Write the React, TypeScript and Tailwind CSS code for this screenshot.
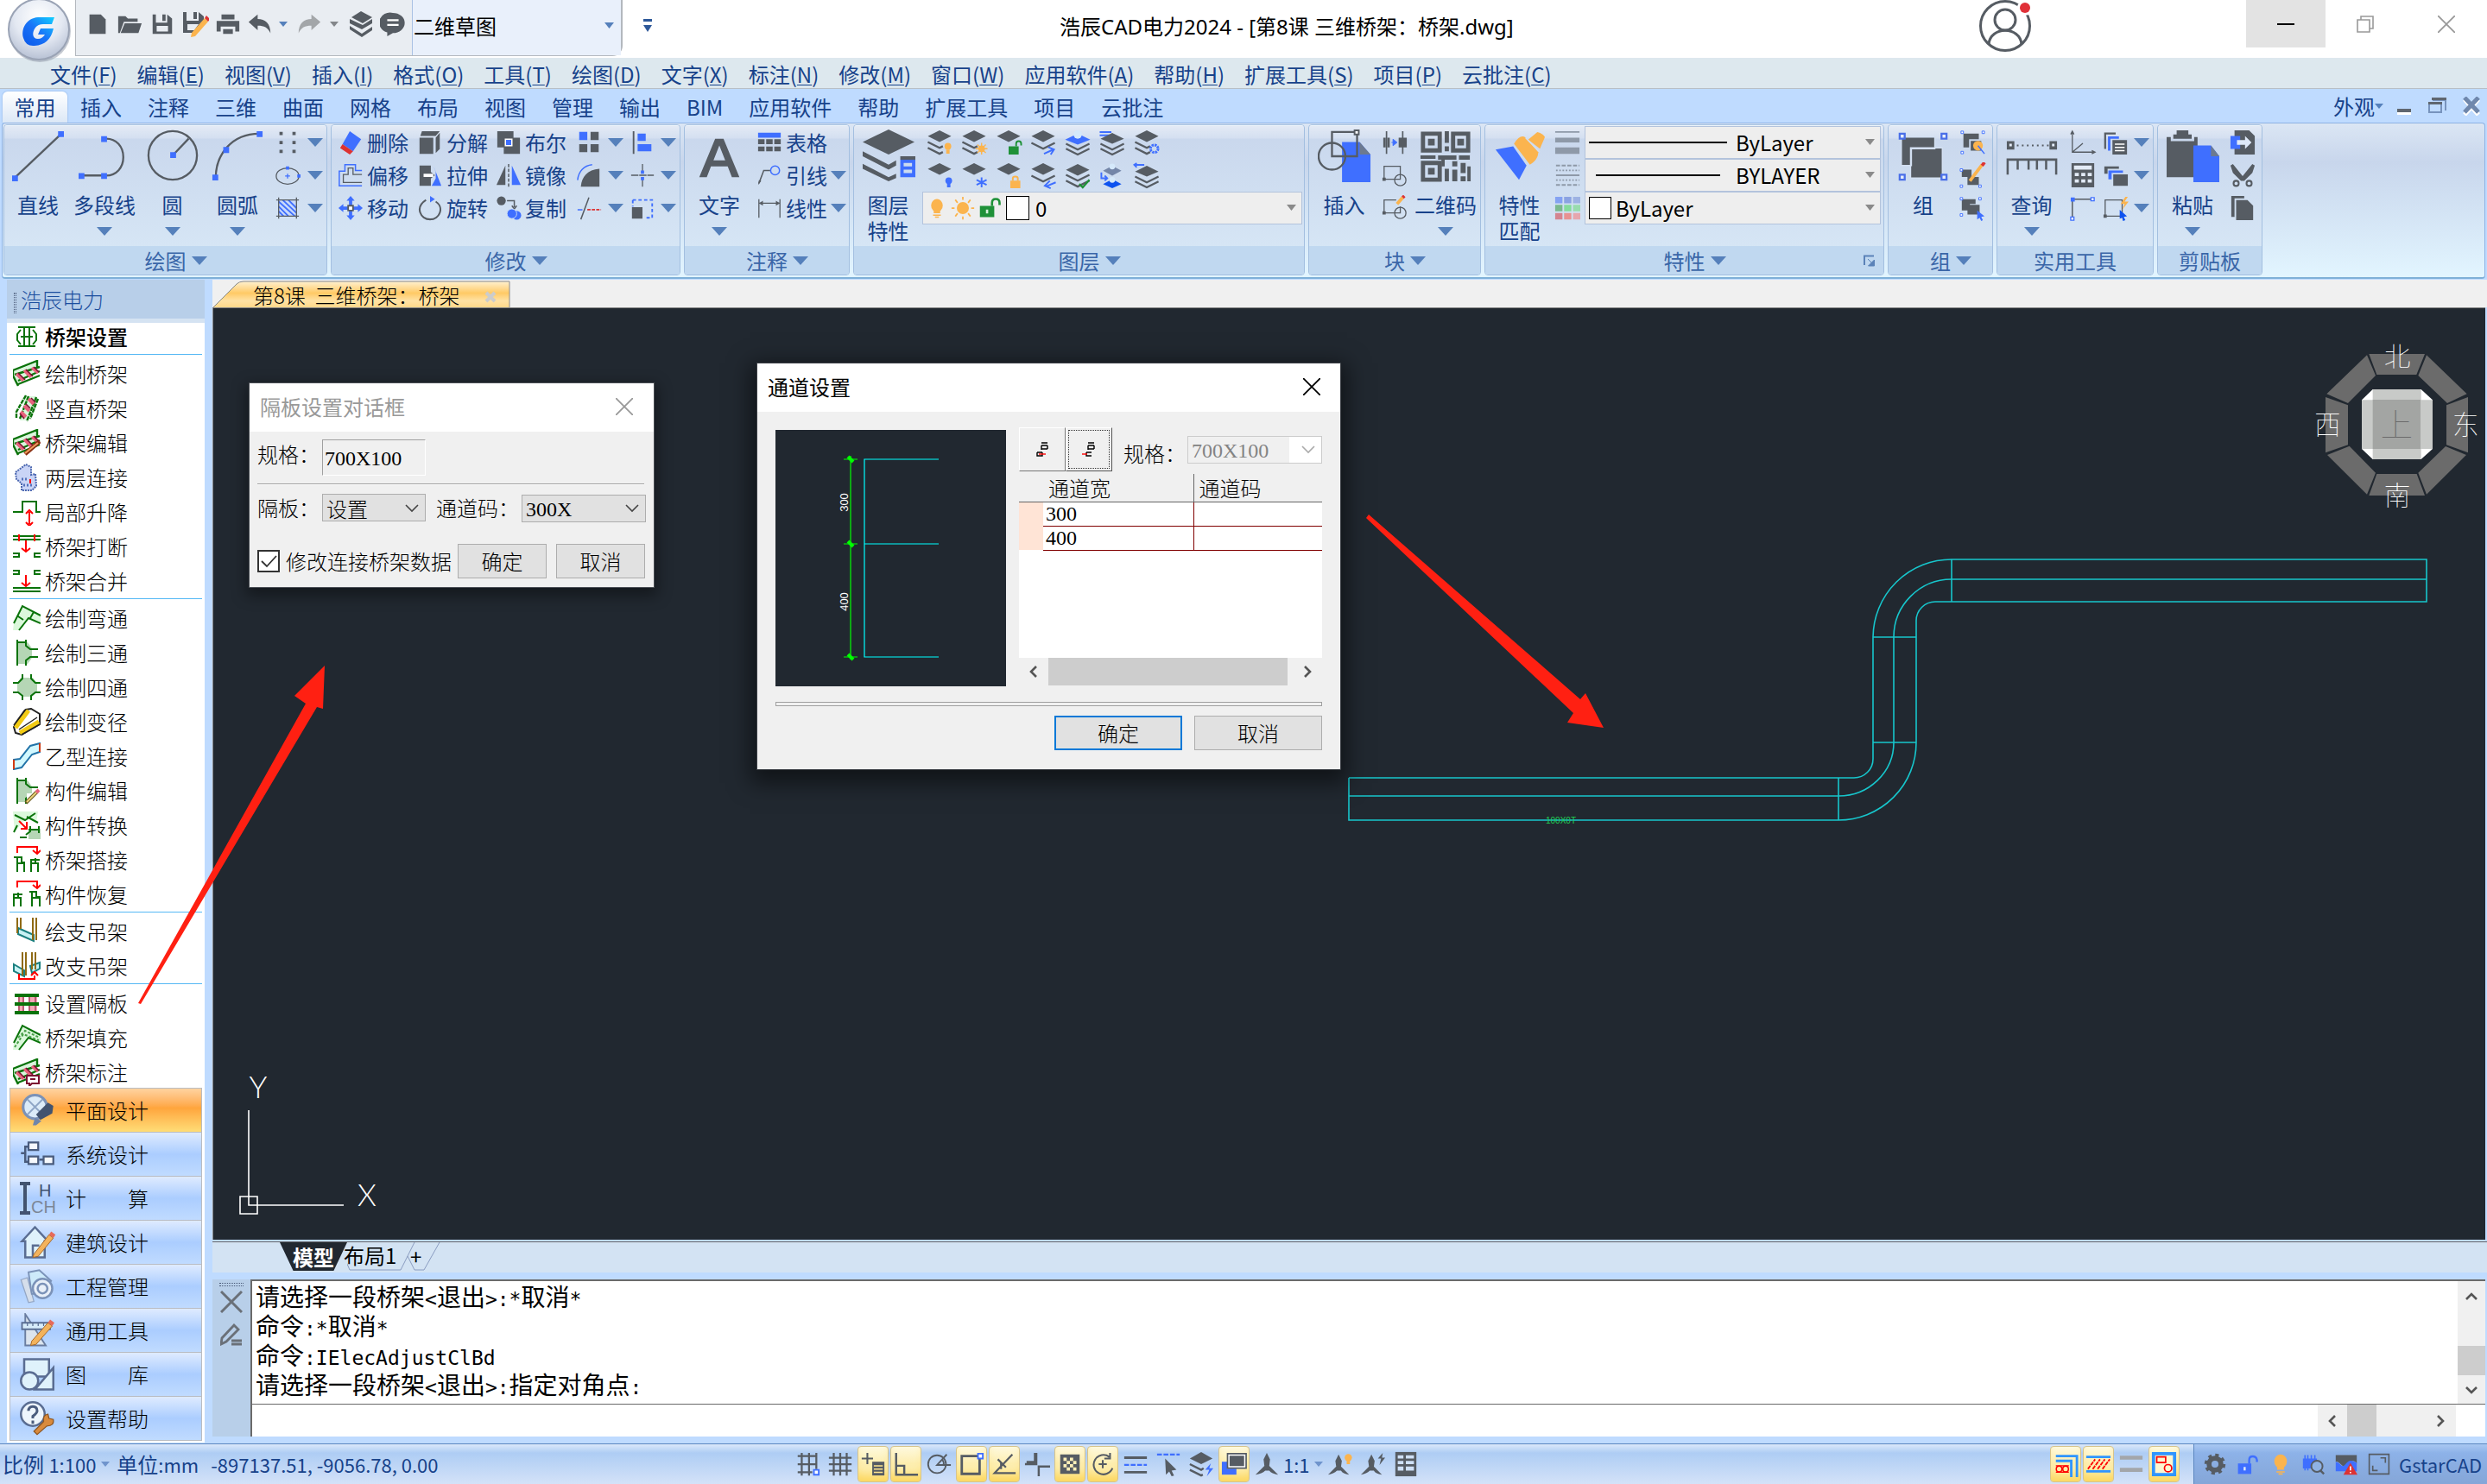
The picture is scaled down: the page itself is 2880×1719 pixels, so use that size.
import type { ReactNode } from 'react';

const K = '#565c63';
const B = '#3f6fff';
const O = '#fbb44e';
const G = '#1f9138';
const DG = '#0a730a';

const stack = (
  <>
    <path d="M16 2 30 9 16 16 2 9Z" fill={K} />
    <path d="M2 15l14 7 14-7M2 22l14 7 14-7" stroke={K} strokeWidth="2.4" fill="none" />
  </>
);
const stackTop = <path d="M16 1 30 8 16 15 2 8Z" fill={K} />;
const stackHalf = <path d="M2 15l14 7 4-2M2 22l14 7 4-2" stroke={K} strokeWidth="2.4" fill="none" />;
const twoLayers = <path d="M2 16l14 7 14-7" stroke={K} strokeWidth="2.4" fill="none" />;
const ladder = (
  <>
    <path d="M1 13 27 3v11L5 27l-3-6Z" fill="#d9f7dc" />
    <path d="M0 12 28 1v8M0 12v6l6 12M2 17 31 8M6 28 31 18M6 24 31 13" stroke={DG} strokeWidth="2.4" fill="none" />
    <path d="M4 16l8 8M13 12l8 8M22 9l7 6" stroke="#e8627c" strokeWidth="3.5" />
    <path d="M6 15l8 8M15 11l8 8M24 8l6 6" stroke="#7a1030" strokeWidth="1.6" />
  </>
);
const tee = (
  <>
    <path d="M6 4h11l5 7v11l-5 7H6Z" fill="#b5d6b5" />
    <path d="M5 1v30M5 4h9M15 1v7l5 4h9M15 31v-6l5-4h9" stroke={DG} strokeWidth="2" fill="none" />
  </>
);
const joint = (
  <>
    <path d="M5 8V1h23v7M23 5l5 4 4-4" stroke="#ff0000" strokeWidth="2" fill="none" />
    <path d="M1 13h9v6h3v11M5 30V14M5 20h8M21 30V16h10M21 20h8v10M26 14v6" stroke={DG} strokeWidth="2" fill="none" />
  </>
);
const jointBack = (
  <>
    <path d="M5 8V1h23v7M23 5l5 4 4-4" stroke="#ff0000" strokeWidth="2" fill="none" />
    <path d="M1 30V16h10M1 20h8v10M6 14v6M19 13h8v6h4v11M22 30V14M22 20h9" stroke={DG} strokeWidth="2" fill="none" />
  </>
);

const icons: Record<string, ReactNode> = {
  // quick access
  newFile: <path d="M6 4h14l6 6v18H6Z" fill={K} />,
  open: <path d="M2 27V6h9l3 3h12v4H9L4 27ZM10 15h21l-4 12H5Z" fill={K} />,
  save: <path d="M4 4h4v10h14V4l6 5v19H4ZM16 4h4v8h-4ZM9 18v7h14v-7Z" fill={K} fillRule="evenodd" />,
  saveAs: (
    <>
      <path d="M2 2h4v10h14V2l6 5v10L16 26H2ZM14 2h4v8h-4ZM7 16v7h8l5-7Z" fill={K} fillRule="evenodd" />
      <path d="M12 26 27 9l4 4-15 17-5 1Z" fill={O} />
      <path d="M27 9l2-3 4 4-2 3Z" fill="#dd3333" />
    </>
  ),
  print: <path d="M8 4h16v6H8ZM2 12h28v13h-5v-6H7v6H2ZM10 22h12v6H10Z" fill={K} />,
  undo: <path d="M1 13 13 3v6c10 0 17 6 17 19-4-8-8-10-17-10v6Z" fill={K} />,
  redo: <path d="M31 13 19 3v6C9 9 2 15 2 28c4-8 8-10 17-10v6Z" fill="#a3a6a9" />,
  pages: (
    <>
      <path d="M16 1 29 8 18 15 5 8Z" fill={K} />
      <path d="M3 10v5l14 7 12-7v-5L18 17ZM3 18v4l14 9 12-8v-4l-12 8Z" fill={K} />
    </>
  ),
  chat: (
    <>
      <path d="M16 2a14 12 0 0 1 0 25l-7 4v-5A13 12 0 0 1 16 2Z" fill={K} />
      <path d="M9 11h14M9 17h14" stroke="#fff" strokeWidth="2.5" />
    </>
  ),
  // draw
  points: <path d="M6 3h4v4H6ZM22 3h4v4h-4ZM6 14h4v4H6ZM22 14h4v4h-4ZM6 25h4v4H6ZM22 25h4v4h-4Z" fill={K} />,
  ellipse: (
    <>
      <ellipse cx="16" cy="17" rx="14" ry="10" stroke={K} strokeWidth="1.4" fill="none" />
      <path d="M16 14v6M13 17h6" stroke={B} strokeWidth="1.4" />
      <path d="M14 5h4v4h-4ZM28 15h4v4h-4Z" fill={B} />
    </>
  ),
  hatch: (
    <>
      <path d="M5 6h22v20H5Z" fill="#c8d9fb" />
      <path d="M5 8l20 18M10 6l17 16M17 6l10 10M5 14l12 12M5 20l6 6" stroke={B} strokeWidth="2" />
      <path d="M2 6h28M2 26h28M5 3v26M27 3v26" stroke={K} strokeWidth="1.4" />
    </>
  ),
  // modify
  erase: (
    <>
      <path d="M15 2 29 12 19 27 6 18Z" fill={B} />
      <path d="M6 18 19 27l-4 4L3 23Z" fill="#dd3333" />
    </>
  ),
  explode: <path d="M3 10h17v20H3ZM6 2h22l-5 6H4ZM23 10l5-6v20l-5 5Z" fill={K} />,
  boolean: (
    <>
      <path d="M2 2h20v20H2ZM10 10h20v20H10Z" fill={K} />
      <path d="M12 12h8v8h-8Z" fill={B} stroke="#fff" strokeWidth="1.6" />
    </>
  ),
  array: (
    <>
      <path d="M18 3h10v10H18ZM4 18h10v10H4ZM18 18h10v10H18Z" fill={K} />
      <path d="M4 3h10v10H4Z" fill={B} />
    </>
  ),
  align: (
    <>
      <path d="M5 2v28" stroke={K} strokeWidth="2" />
      <path d="M10 5h10v9H10ZM10 18h17v9H10Z" fill={B} />
    </>
  ),
  offset: (
    <>
      <path d="M30 10h-8V3H9v8H2v18h28" stroke={B} strokeWidth="1.6" fill="none" />
      <path d="M30 15h-11V7h-6v8H7v10h23" stroke={K} strokeWidth="1.4" fill="none" />
    </>
  ),
  stretch: (
    <>
      <path d="M3 4h14v8l5 4-5 4v9H3Z" fill={K} />
      <path d="M20 4l10 25H18l5-9V12Z" fill={B} />
      <path d="M8 16h12" stroke="#fff" strokeWidth="4" />
    </>
  ),
  mirror: (
    <>
      <path d="M12 4v24H1Z" fill={K} />
      <path d="M20 4v24h11Z" fill={B} />
      <path d="M16 2v28" stroke={K} strokeWidth="1.6" strokeDasharray="4 2" />
    </>
  ),
  fillet: (
    <>
      <path d="M6 30C7 18 14 9 29 8v22Z" fill={K} />
      <path d="M2 22C3 11 10 4 20 3" stroke={B} strokeWidth="1.6" fill="none" />
    </>
  ),
  breakAt: (
    <>
      <path d="M16 2v9M16 21v9M2 16h28" stroke={K} strokeWidth="1.4" strokeDasharray="9 1" />
      <path d="M14 10h4v4h-4ZM14 18h4v4h-4Z" fill={B} />
    </>
  ),
  move: (
    <>
      <path d="M16 1l5 6h-3v6h-4V7h-3ZM16 31l5-6h-3v-6h-4v6h-3ZM1 16l6-5v3h6v4H7v3ZM31 16l-6-5v3h-6v4h6v3Z" fill={B} />
      <path d="M13 13h6v6h-6Z" fill="#fff" stroke={K} strokeWidth="2" />
    </>
  ),
  rotate: (
    <>
      <path d="M11 6C-3 15 4 30 16 30S34 15 23 8" stroke={K} strokeWidth="2.2" fill="none" />
      <path d="M16 1l6 4-6 4Z" fill={B} />
    </>
  ),
  copy: (
    <>
      <circle cx="7" cy="7" r="5.5" fill={K} />
      <path d="M14 7h9v8M20 13l3 4 3-4" stroke={K} strokeWidth="1.6" fill="none" />
      <circle cx="26" cy="25" r="5.5" fill={B} />
      <circle cx="20" cy="23" r="6" fill={B} stroke="#d0e0f4" />
    </>
  ),
  trim: (
    <>
      <path d="M6 30 16 3" stroke={K} strokeWidth="1.6" />
      <path d="M2 18h6" stroke={B} strokeWidth="1.6" />
      <path d="M14 18h17" stroke="#dd3333" strokeWidth="1.8" strokeDasharray="4 1.5" />
    </>
  ),
  scale: (
    <>
      <path d="M4 6h24v22H18M4 6v8" stroke={B} strokeWidth="2" strokeDasharray="4 3" fill="none" />
      <path d="M3 15h13v14H3Z" fill={K} />
    </>
  ),
  // annotation
  table: (
    <>
      <path d="M2 4h28v6H2Z" fill={B} />
      <path d="M2 12h8v6H2ZM12 12h8v6h-8ZM22 12h8v6h-8ZM2 21h8v6H2ZM12 21h8v6h-8ZM22 21h8v6h-8Z" fill={K} />
    </>
  ),
  leader: (
    <>
      <path d="M3 26 9 10h8" stroke={K} strokeWidth="1.6" fill="none" />
      <path d="M2 28l1-6 3 1Z" fill={K} />
      <circle cx="23" cy="10" r="5.5" stroke={B} strokeWidth="1.6" fill="none" />
    </>
  ),
  linear: (
    <>
      <path d="M3 5v23M29 5v23M3 10h26" stroke={K} strokeWidth="1.4" />
      <path d="M3 10l5-3v6ZM29 10l-5-3v6Z" fill={K} />
    </>
  ),
  // layer states
  lyBulb: <>{stackTop}{stackHalf}<circle cx="26" cy="20" r="4" fill={O} /><path d="M24 24h4v5h-4Z" fill={O} /></>,
  lySun: <>{stackTop}{stackHalf}<circle cx="25" cy="23" r="4" fill={O} /><path d="M25 16v14M18 23h14M20 18l10 10M30 18 20 28" stroke={O} strokeWidth="1.4" /></>,
  lyUnlock: <>{stackTop}<path d="M16 20h12v10H16Z" fill={G} /><path d="M25 20v-3q0-3 3-3t3 3v2" stroke={G} strokeWidth="2" fill="none" /></>,
  lyNext: <>{stackTop}{twoLayers}<path d="M17 29l11-5M22 21l7 3-4 6" stroke={B} strokeWidth="2" fill="none" /></>,
  lyBlue: (
    <>
      <path d="M16 5 31 12 16 18 1 12Z" fill={B} />
      <circle cx="16" cy="6" r="5" fill="#d5e9fb" />
      <path d="M2 17l14 7 14-7M2 23l14 7 14-7" stroke={K} strokeWidth="2.2" fill="none" />
    </>
  ),
  lyList: <><path d="M1 3h14M1 7h12" stroke={B} strokeWidth="2" /><path d="M16 4 30 11 16 17 2 11Z" fill={K} /><path d="M2 17l14 7 14-7M2 23l14 7 14-7" stroke={K} strokeWidth="2.2" fill="none" /></>,
  lyGear: <>{stackTop}{stackHalf}<circle cx="25" cy="23" r="4.5" stroke={B} strokeWidth="3" strokeDasharray="2.5 1" fill="none" /></>,
  lyBulbB: <>{stackTop}<circle cx="27" cy="22" r="4" fill={B} /><path d="M25 25h4v5h-4Z" fill={B} /></>,
  lyFreeze: <>{stackTop}<path d="M25 18v12M19 21l12 6M31 21l-12 6" stroke={B} strokeWidth="2" /></>,
  lyLock: <>{stackTop}<path d="M18 22h12v9H18Z" fill={O} /><path d="M21 22v-3q0-2 3-2t3 2v3" stroke={O} strokeWidth="2" fill="none" /></>,
  lyPrev: <>{stackTop}{twoLayers}<path d="M31 24l-12 5M24 22l-6 6 7 3" stroke={B} strokeWidth="2" fill="none" /></>,
  lyCheck: <>{stack}<path d="M18 26l4 4 8-9" stroke={G} strokeWidth="2.4" fill="none" /></>,
  lyMove: (
    <>
      <path d="M16 4 27 10 16 16 5 10Z" fill="#7486a8" />
      <path d="M16 20 27 26 16 31 5 26Z" fill="#0d52ef" />
      <circle cx="16" cy="5" r="3.5" fill="#d5e9fb" /><circle cx="16" cy="21" r="3.5" fill="#d5e9fb" />
      <path d="M3 12v7h6M7 16l3 3-3 3" stroke={B} strokeWidth="2" fill="none" />
    </>
  ),
  lyWalk: <><path d="M1 3h12M4 1 1 3l3 3" stroke={B} strokeWidth="2" fill="none" /><path d="M16 4 30 11 16 17 2 11Z" fill={K} /><path d="M2 17l14 7 14-7M2 23l14 7 14-7" stroke={K} strokeWidth="2.2" fill="none" /></>,
  bulb: <><ellipse cx="16" cy="12" rx="9" ry="10" fill={O} /><path d="M11 19h10v5H11ZM10 26h12v2H10ZM13 29h6v2h-6Z" fill={O} /></>,
  sun: <><circle cx="16" cy="16" r="8" fill={O} /><path d="M16 1v4M16 27v4M1 16h4M27 16h4M6 5l3 4M23 23l3 4M26 5l-3 4M9 23l-3 4" stroke={O} strokeWidth="2" /></>,
  unlock: <><path d="M2 13h19v15H2Z" fill={G} /><path d="M18 13V9q0-5 5-5t5 5v3" stroke={G} strokeWidth="3" fill="none" /><path d="M10 18h3v5h-3Z" fill="#d6f0da" /></>,
  // block
  attr: (
    <>
      <path d="M6 2v28M26 2v28" stroke={K} strokeWidth="1.8" />
      <path d="M2 10h3v12H2ZM7 10h3v12H7ZM21 10h10v12H21Z" fill={K} />
      <path d="M12 16h4M14 12l5 4-5 4Z" fill={B} stroke={B} />
    </>
  ),
  block: (
    <>
      <path d="M3 5h20v16H3Z" stroke={K} strokeWidth="1.4" fill="none" />
      <ellipse cx="23" cy="22" rx="7" ry="7" stroke={K} strokeWidth="1.4" fill="none" />
      <path d="M1 19h4v4H1Z" fill={K} />
    </>
  ),
  blockEdit: (
    <>
      <path d="M18 6H3v16h20v-8" stroke={K} strokeWidth="1.4" fill="none" />
      <ellipse cx="23" cy="22" rx="7" ry="7" stroke={K} strokeWidth="1.4" fill="none" />
      <path d="M1 20h4v4H1Z" fill={K} />
      <path d="M19 11 26 3" stroke={O} strokeWidth="4" /><path d="M26 3l2-2" stroke="#dd3333" strokeWidth="4" />
    </>
  ),
  // properties
  weights: <path d="M1 2h30v2H1ZM1 10h30v6H1ZM1 22h30v8H1Z" fill="#8e99a8" />,
  types: (
    <>
      <path d="M2 4h29M2 28h29" stroke="#8e99a8" strokeWidth="2" strokeDasharray="5 2" />
      <path d="M2 10h29M2 22h29" stroke="#8e99a8" strokeWidth="2" strokeDasharray="2 2" />
      <path d="M2 16h29" stroke="#8e99a8" strokeWidth="2" />
    </>
  ),
  colors: (
    <>
      <path d="M1 2h9v8H1Z" fill="#84a2f2" /><path d="M12 2h9v8h-9Z" fill="#8ba3e2" /><path d="M23 2h9v8h-9Z" fill="#9db2e3" />
      <path d="M1 12h9v8H1Z" fill="#7ab88f" /><path d="M12 12h9v8h-9Z" fill="#84dc9c" /><path d="M23 12h9v8h-9Z" fill="#98dcae" />
      <path d="M1 22h9v8H1Z" fill="#d48490" /><path d="M12 22h9v8h-9Z" fill="#e89292" /><path d="M23 22h9v8h-9Z" fill="#e6a6ae" />
    </>
  ),
  // group
  groupNew: (
    <>
      <path d="M5 5h19v7H12v10H5ZM14 14h13v12H14Z" fill={K} />
      <path d="M2 2h3v3H2ZM28 2h3v3h-3ZM2 27h3v3H2Z" fill="#fff" stroke={B} />
      <circle cx="23" cy="20" r="6" fill={O} /><path d="M23 20l8 10" stroke={B} strokeWidth="1.6" />
    </>
  ),
  groupEdit: (
    <>
      <path d="M3 9h12v9H3ZM10 18h14v10H10Z" fill={K} />
      <path d="M1 8h3v3H1ZM1 28h3v3H1ZM24 28h3v3h-3Z" fill="#fff" stroke={B} />
      <path d="M13 23 28 3" stroke={O} strokeWidth="4" /><path d="M28 4l3-4" stroke="#dd3333" strokeWidth="4" />
    </>
  ),
  groupPick: (
    <>
      <path d="M3 5h17v6h-7v8H3ZM10 12h15v12H10Z" fill={K} />
      <path d="M1 3h3v3H1ZM24 3h3v3h-3ZM1 23h3v3H1Z" fill="#fff" stroke={B} />
      <path d="M22 19l9 7-4 1 2 4-2 1-2-4-3 2Z" fill={B} />
    </>
  ),
  // utilities
  axis: <path d="M3 3v25h27M3 28 16 17M1 6l2-4 2 4M27 26l4 2-4 2" stroke={K} strokeWidth="1.4" fill="none" />,
  calc: (
    <>
      <path d="M2 1h28v30H2Z" fill={K} />
      <path d="M5 4h22v5H5ZM6 13h5v4H6ZM14 13h5v4h-5ZM22 13h5v4h-5ZM6 21h5v4H6ZM14 21h5v4h-5ZM22 21h5v4h-5Z" fill="#e3ebf6" />
    </>
  ),
  corner: (
    <>
      <path d="M3 5v22M3 5h24" stroke={K} strokeWidth="1.6" />
      <path d="M1 3h5v5H1Z" fill={B} />
      <path d="M26 3h4v4h-4ZM1 27h4v4H1Z" fill="#fff" stroke={B} strokeWidth="1.4" />
    </>
  ),
  sheets: (
    <>
      <path d="M3 24V5h13" stroke={K} strokeWidth="2.4" fill="none" /><path d="M8 26V10h12" stroke={B} strokeWidth="3" fill="none" />
      <path d="M12 13h18v18H12Z" fill={K} /><path d="M15 18h12M15 22h12M15 26h12" stroke="#fff" strokeWidth="1.6" />
    </>
  ),
  order: <><path d="M2 14V5h18v3H6v6Z" fill={K} /><path d="M7 21V10h18v3H11v8Z" fill={B} /><path d="M13 15h18v14H13Z" fill={K} /></>,
  quick: (
    <>
      <path d="M3 6h21v20H3Z" stroke={K} strokeWidth="1.4" fill="none" />
      <path d="M1 24h4v4H1Z" fill={K} />
      <path d="M28 2l-6 9h5l-3 7 8-10h-5l4-6Z" fill={O} /><path d="M21 18l9 8-4 1 2 4-3 1-1-4-3 1Z" fill="#0d52ef" />
    </>
  ),
  pasteTo: (
    <>
      <path d="M6 1h18l7 7v23H6Z" fill={K} />
      <path d="M1 8h12v16H1Z" fill={B} /><path d="M9 13h10V8l8 8-8 8v-5H9Z" fill="#dfe9f8" />
    </>
  ),
  cut: (
    <>
      <path d="M1 4l3-2 12 15L28 2l3 2-3 9-10 10h-4L4 13Z" fill={K} />
      <circle cx="8" cy="26" r="3.2" stroke={K} strokeWidth="2.2" fill="none" /><circle cx="24" cy="26" r="3.2" stroke={K} strokeWidth="2.2" fill="none" />
    </>
  ),
  copyClip: <path d="M2 1h16v3H6v23H2ZM8 6h14l7 7v18H8Z" fill={K} />,
  launcher: <><path d="M4 26V5h22" stroke="#5b82b8" strokeWidth="4" fill="none" /><path d="M12 12l14 14M27 14v14H13Z" stroke="#5b82b8" strokeWidth="2" fill="#5b82b8" /></>,
  // side list
  trSet: <path d="M6 5h20M6 27h20M13 5v22M19 5v22M9 8l-4 5v7l4 5M23 8l4 5v7l-4 5M9 16h14" stroke={DG} strokeWidth="2" fill="none" />,
  trDraw: ladder,
  trVert: (
    <>
      <path d="M14 2 26 2 18 30H8Z" fill="#d9f7dc" />
      <path d="M15 1 4 20v7M18 2 8 28M27 3 16 31M29 5 20 28" stroke={DG} strokeWidth="2.4" fill="none" strokeDasharray="5 1" />
      <path d="M9 20l6 6M13 13l6 6M18 5l6 6" stroke="#e8627c" strokeWidth="4" />
      <path d="M8 22l5 6M15 11l5 5M21 4l5 5" stroke="#7a1030" strokeWidth="1.6" />
    </>
  ),
  trEdit: <>{ladder}<path d="M14 29 31 14" stroke="#8a2f12" strokeWidth="5" /><path d="M14 28 29 16" stroke="#f0a060" strokeWidth="2" /></>,
  trTwo: (
    <>
      <path d="M3 10 15 1l6 3v9l5-1 1 14-5 5H10v-8L4 18Z" fill="#c9d4f6" stroke="#4a66b0" strokeDasharray="2 1" strokeWidth="2" />
      <path d="M10 18h8M12 25h12" stroke="#5572bb" strokeWidth="3" strokeDasharray="2 2" />
      <path d="M20 18v5" stroke="red" strokeWidth="2" />
    </>
  ),
  trLift: (
    <>
      <path d="M0 16h11V4h16v12h5" stroke={DG} strokeWidth="2" fill="none" />
      <path d="M19 16v14M15 18l4-4 4 4M15 28l4 4 4-4" stroke="red" strokeWidth="2" fill="none" />
    </>
  ),
  trBreak: (
    <>
      <path d="M0 4h32M0 8h32M0 24h7v4H0M32 24h-7v4h7" stroke={DG} strokeWidth="2" fill="none" />
      <path d="M7 2v8M25 2v8M15 9v13M10 18l5 4 5-4" stroke="red" strokeWidth="2" fill="none" />
    </>
  ),
  trMerge: (
    <>
      <path d="M0 4h7v4H0M32 4h-7v4h7M0 24h32M0 28h32" stroke={DG} strokeWidth="2" fill="none" />
      <path d="M15 9v13M10 18l5 4 5-4" stroke="red" strokeWidth="2" fill="none" />
    </>
  ),
  trBend: (
    <>
      <path d="M1 22 11 3 32 13v9L18 16 8 30H0Z" fill="#dcf8dc" />
      <path d="M1 22 11 2 32 13M32 22 18 16 7 30M6 14l6 4M24 9l-4 7" stroke={DG} strokeWidth="2" fill="none" />
    </>
  ),
  trTee: tee,
  trCross: (
    <>
      <path d="M9 5h14l5 7v9l-6 6H11l-6-6v-9Z" fill="#b5d6b5" />
      <path d="M11 1v5l-5 5H0M21 1v5l5 5h6M0 22h6l5 4v5M32 22h-6l-5 4v5" stroke={DG} strokeWidth="2" fill="none" />
    </>
  ),
  trTaper: (
    <>
      <path d="M1 22 15 2l6-1 10 6v12L10 31 3 29Z" fill="#fff" stroke="#222" strokeWidth="2" />
      <path d="M3 23 18 3M8 29 30 16" stroke="#f2cb14" strokeWidth="5" /><path d="M1 20 14 2M7 25 28 11M10 31 31 19" stroke="#222" strokeWidth="1.5" />
    </>
  ),
  trZ: (
    <>
      <path d="M1 20 8 19 20 4 31 1v10l-9 3L10 29l-9 2Z" fill="#d2f8ff" stroke="#2273a8" strokeWidth="2" />
      <path d="M1 20v11M31 1v10" stroke="#d03a12" strokeWidth="2" />
    </>
  ),
  trPartEdit: <>{tee}<path d="M16 19h16v13H16Z" fill="#fff" /><path d="M15 30 28 17" stroke="#6b5a20" strokeWidth="4" /><path d="M16 29 28 17" stroke="#ead27a" strokeWidth="2" /><path d="M27 18l3-3" stroke="#e8627c" strokeWidth="4" /></>,
  trConvert: (
    <>
      <path d="M0 0h29l-2 13-12-6L2 24Z" fill="#dcf8dc" /><path d="M18 20h14v12H18Z" fill="#b5d6b5" />
      <path d="M2 4 14 10 26 2M1 24l4-8M16 6l13 7M20 17v6l-5 4M30 17v8M8 30h8M18 21h12" stroke={DG} strokeWidth="2" fill="none" />
      <path d="M7 11l8 8M9 20h7v-8" stroke="red" strokeWidth="2" fill="none" />
    </>
  ),
  trJoin: joint,
  trRestore: jointBack,
  trHanger: (
    <>
      <path d="M6 12 24 20v7L6 19Z" fill="#c8f2f4" stroke="#1c8080" strokeWidth="2" />
      <path d="M5 0v18M9 0v13M23 0v26M27 0v26" stroke="#8f6a14" strokeWidth="2" />
    </>
  ),
  trHangerEdit: (
    <>
      <path d="M1 14 13 21v7L1 22ZM20 16l11-4v7l-9 5Z" fill="#c8f2f4" stroke="#1c8080" strokeWidth="2" />
      <path d="M11 0v27M15 0v27M22 0v20M26 0v20" stroke="#8f6a14" strokeWidth="2" />
      <path d="M7 25v6h18v-4M21 27l4-4 4 4" stroke="red" strokeWidth="2" fill="none" />
    </>
  ),
  trPlate: (
    <>
      <path d="M6 6h22v22H6Z" fill="#f7a9b8" /><path d="M13 6h5v22h-5Z" fill="#fff" />
      <path d="M7 6v22M12 6v22M19 6v22M26 6v22" stroke="#7a1030" />
      <path d="M2 7h28M2 17h28M2 27h28" stroke={DG} strokeWidth="4" />
    </>
  ),
  trFill: (
    <>
      <path d="M1 22 11 3 32 13v9L18 16 8 30H0Z" fill="#dcf8dc" />
      <path d="M1 22 11 2 32 13M32 22 18 16 7 30" stroke={DG} strokeWidth="2" fill="none" />
      <path d="M2 27 12 12l18 7M6 16 14 8l17 8" stroke="#4aa04a" strokeWidth="2" strokeDasharray="3 2" fill="none" />
    </>
  ),
  trLabel: <>{ladder}<path d="M16 20h14v9h-8l-3 3v-3h-3Z" fill="#fff" stroke="#7a1030" strokeWidth="2" /><path d="M20 24h6" stroke="#7a1030" strokeWidth="2" /></>,
  // categories
  catPlan: (
    <>
      <circle cx="14" cy="13" r="11" fill="#dcebf8" stroke="#7b92b8" strokeWidth="2.5" />
      <path d="M7 6l14 14M21 6 7 20" stroke="#8fa6c6" strokeWidth="1.5" />
      <path d="M15 20 26 9l5 3-1 7-11 6Z" fill="#42536f" /><path d="M12 30l2-7 6 3-5 4Z" fill="#6f86ab" />
    </>
  ),
  catSystem: (
    <>
      <path d="M9 9H5v14h4M18 21h4M1 15h4" stroke="#4a5c7d" strokeWidth="2" fill="none" />
      <path d="M8 5h9v7H8ZM8 18h9v7H8ZM22 18h9v7h-9Z" fill="#f6f9fd" stroke="#4a5c7d" strokeWidth="1.8" />
    </>
  ),
  catHouse: (
    <>
      <path d="M2 15 14 2l12 13h-3v15H5V15Z" fill="#dff2fb" stroke="#5a6d92" strokeWidth="2" />
      <path d="M12 30V19h6" fill="none" stroke="#5a6d92" strokeWidth="2" />
      <path d="M13 27 27 9l4 3-14 17-5 1Z" fill="#f3b35c" stroke="#a8692a" strokeWidth=".8" /><path d="M27 9l2-3 4 3-2 3Z" fill="#e66a5a" />
    </>
  ),
  catManage: (
    <>
      <path d="M1 10l6-2 6 22-5 1Z" fill="#d5deeb" stroke="#93a6c4" /><path d="M8 3 18 1l11 10-8 12H11Z" fill="#cdeafa" stroke="#7b92b8" strokeWidth="1.5" />
      <circle cx="21" cy="18" r="9" fill="#e8eff8" stroke="#7b92b8" strokeWidth="2" /><circle cx="21" cy="18" r="4.5" fill="none" stroke="#7b92b8" strokeWidth="2" />
    </>
  ),
  catTools: (
    <>
      <path d="M5 1 24 30H5Z" fill="#dbe4ee" stroke="#6a7d9f" strokeWidth="1.5" />
      <path d="M2 9h26v6H2Z" fill="#d7ecfa" stroke="#5a6d92" strokeWidth="1.5" /><path d="M7 9v3M12 9v3M17 9v3M22 9v3" stroke="#5a6d92" />
      <path d="M11 26 26 9l4 3-15 17-5 1Z" fill="#f3b35c" stroke="#a8692a" strokeWidth=".8" /><path d="M26 9l2-3 4 3-2 3Z" fill="#e66a5a" />
    </>
  ),
  catLib: (
    <>
      <path d="M4 2h23v16H4Z" fill="#dff2fb" stroke="#5a6d92" strokeWidth="2" />
      <path d="M31 10v20H14Z" fill="#dff2fb" stroke="#5a6d92" strokeWidth="2" />
      <circle cx="9" cy="22" r="8" fill="#dff2fb" stroke="#5a6d92" strokeWidth="2" />
    </>
  ),
  catHelp: (
    <>
      <circle cx="12" cy="12" r="11" fill="#eef5fc" stroke="#5a6d92" strokeWidth="2" />
      <path d="M8 9q0-4 4-4t4 4q0 2-4 5v2M12 18v3" stroke="#4a5c7d" strokeWidth="2.4" fill="none" />
      <path d="M13 28 22 19q-1-6 4-7l1 4 4 1q1 6-6 6l-9 8Z" fill="#d98a3c" stroke="#8f5722" strokeWidth="1" />
    </>
  ),
  // status bar
  stSnap: <><path d="M4 6h24M4 16h24M4 26h18M9 2v28M18 2v28M27 2v20" stroke={K} strokeWidth="2.4" /><path d="M24 23h6v6h-6Z" fill="#fff" stroke={B} strokeWidth="2" /></>,
  stGrid: <path d="M2 8h28M2 16h28M2 24h28M8 2v28M16 2v28M24 2v28" stroke={K} strokeWidth="2.4" />,
  stInput: <><path d="M2 9h14M9 2v14" stroke={K} strokeWidth="2.2" /><path d="M15 13h15v17H15Z" fill={K} /><path d="M17 18h11M17 22h11M17 26h11" stroke="#fde48f" strokeWidth="1.6" /></>,
  stOrtho: <path d="M4 2v27h27M4 18h10v11" stroke={K} strokeWidth="2.6" fill="none" />,
  stPolar: <><circle cx="14" cy="16" r="11" stroke={K} strokeWidth="2" fill="none" /><path d="M31 17H14L26 4M20 10q3 3 2 7" stroke={K} strokeWidth="2" fill="none" /></>,
  stOsnap: <><path d="M4 6h22v22H4Z" stroke={K} strokeWidth="3" fill="none" /><path d="M24 3h6v6h-6Z" fill="#fff" stroke={B} strokeWidth="2" /></>,
  stTrack: <path d="M26 4 4 27h26M8 10l10 10M12 22v-8" stroke={K} strokeWidth="2.4" fill="none" />,
  stDyn: <><path d="M15 2v14H1M18 31V19h14" stroke={K} strokeWidth="2.6" fill="none" /><path d="M12 2h4v14H3v-4h9Z" fill={K} /></>,
  stTrans: <><path d="M4 4h24v24H4Z" fill={K} /><path d="M8 8h4v4H8ZM16 8h4v4h-4ZM12 12h4v4h-4ZM20 12h4v4h-4ZM8 16h4v4H8ZM16 16h4v4h-4ZM12 20h4v4h-4ZM20 20h4v4h-4Z" fill="#fdf0b8" /></>,
  stCycle: <path d="M24 7A12 12 0 1 0 28 21M25 2v7h-7M11 16h10M16 11v10" stroke={K} strokeWidth="2.2" fill="none" />,
  stWeight: <><path d="M2 8h28M2 26h28" stroke={K} strokeWidth="3" /><path d="M2 17h28" stroke={B} strokeWidth="2.4" strokeDasharray="6 2" /></>,
  stPick: <><path d="M2 4h28" stroke={B} strokeWidth="2.4" strokeDasharray="6 2" /><path d="M12 9l14 14-6 1 3 6-3 1-3-6-4 4Z" fill={K} /></>,
  stLayer: <><path d="M16 1 30 9 16 16 2 9Z" fill={K} /><path d="M2 16l14 7 3-2M2 23l14 7 2-1" stroke={K} strokeWidth="2.6" fill="none" /><path d="M28 15l-7 8h5l-3 8 8-10h-5Z" fill={B} /></>,
  stFront: <><path d="M1 13h18v16H1Z" fill={B} /><path d="M9 4h21v16H9Z" fill={K} stroke="#fff" strokeWidth="3" /><path d="M8 3h23v18H8Z" fill="none" stroke={K} strokeWidth="1.8" /></>,
  stAnno: <path d="M16 2l4 8-1 8 11 11q-8-1-11-5h-5q-4 4-12 5l11-11-1-8Z" fill={K} />,
  stAnnoBulb: <><path d="M14 4l4 8-1 7 10 10q-8-1-10-5h-5q-4 4-11 5l10-10-1-7Z" fill={K} /><circle cx="26" cy="8" r="4.5" fill={O} /><path d="M24 11h4v5h-4Z" fill={O} /></>,
  stAnnoFlash: <><path d="M14 4l4 8-1 7 10 10q-8-1-10-5h-5q-4 4-11 5l10-10-1-7Z" fill={K} /><path d="M28 2l-6 7h4l-2 8 7-9h-4Z" fill={K} /></>,
  stTable: <><path d="M3 1h26v30H3Z" fill={K} /><path d="M6 5h7v4H6ZM16 5h10v4H16ZM6 12h7v4H6ZM16 12h10v4H16ZM6 19h7v5H6ZM16 19h10v5H16Z" fill="#cfe0f6" /></>,
  stCorner: <><path d="M4 6h26v26M4 12h19v20" stroke="#2f95ff" strokeWidth="3" fill="none" /><circle cx="8" cy="22" r="3.5" stroke="red" strokeWidth="1.6" fill="none" /><circle cx="16" cy="22" r="3.5" stroke="red" strokeWidth="1.6" fill="none" /><path d="M4 18h16M4 26h16" stroke="red" strokeWidth="1.4" /></>,
  stHatch: <><path d="M1 7h30M1 25h30" stroke="#2f95ff" strokeWidth="3" /><path d="M3 22 12 10M9 22 18 10M15 22 24 10M21 22 30 10" stroke="red" strokeWidth="1.8" strokeDasharray="5 1" /></>,
  stEqual: <path d="M2 8h28M2 23h28" stroke="#a3a6aa" strokeWidth="5" />,
  stShapes: <><path d="M3 3h26v26H3Z" stroke="#2f95ff" strokeWidth="4" fill="#fdf6d0" /><path d="M7 7h11v7H7Z" stroke="red" strokeWidth="1.8" fill="none" /><circle cx="21" cy="21" r="4.5" stroke="red" strokeWidth="1.8" fill="none" /></>,
  gear: <><circle cx="16" cy="16" r="8.5" fill="none" stroke={K} strokeWidth="7" /><circle cx="16" cy="16" r="13" fill="none" stroke={K} strokeWidth="4" strokeDasharray="5.1 5.1" /></>,
  unlockB: <><path d="M2 15h19v15H2Z" fill={B} /><path d="M18 15v-5q0-5 5-5t6 5v3" stroke={B} strokeWidth="3" fill="none" /><path d="M10 20h3v5h-3Z" fill="#dfe9fb" /></>,
  chip: <><path d="M1 8h20v14H1ZM3 3h2v22H3ZM7 3h2v22H7ZM12 3h2v18h-2ZM17 3h2v10h-2Z" fill={B} /><circle cx="21" cy="19" r="8" stroke={K} strokeWidth="2.4" fill="#8fb2e4" /><path d="M26 25l5 5" stroke={K} strokeWidth="3" /></>,
  wave: <><path d="M1 3h30v12q-4-6-9-2t-7 6-7-3-7-3Z" fill={K} /><path d="M1 13q4 0 7 4t7-1 7-5 9 3v12H1Z" fill={B} /><path d="M22 14l10 17H12Z" fill="#dd3333" /><path d="M22 19v6M22 27v2" stroke="#fff" strokeWidth="2" /></>,
  expand: <path d="M2 2h28v28H2ZM18 7h7v7M14 25H7v-7" stroke={K} strokeWidth="2" fill="none" />,
};

function Icon({ name, className = 'h-8 w-8' }: { name: string; className?: string }) {
  return (
    <svg viewBox="0 0 32 32" className={`shrink-0 ${className}`} aria-hidden="true">
      {icons[name]}
    </svg>
  );
}

const bigIcons: Record<string, ReactNode> = {
  line: (
    <>
      <path d="M4 58 60 5" stroke={K} strokeWidth="2.4" />
      <path d="M1 55h7v7H1ZM56 2h7v7h-7Z" fill={B} />
    </>
  ),
  pline: (
    <>
      <path d="M4 55h28C62 57 62 9 32 11" stroke={K} strokeWidth="2.4" fill="none" />
      <path d="M1 52h7v7H1ZM28 52h7v7h-7ZM28 8h7v7h-7Z" fill={B} />
    </>
  ),
  circle: (
    <>
      <circle cx="32" cy="31" r="29" stroke={K} strokeWidth="2.4" fill="none" />
      <path d="M32 31 51 11" stroke={K} strokeWidth="2.4" />
      <path d="M29 27h7v7h-7Z" fill={B} />
    </>
  ),
  arc: (
    <>
      <path d="M6 58C6 30 25 5 58 5" stroke={K} strokeWidth="2.4" fill="none" />
      <path d="M2 54h7v7H2ZM15 21h7v7h-7ZM55 2h7v7h-7Z" fill={B} />
    </>
  ),
  text: <path d="M8 57 27 11h10l19 46h-9l-5-13H22l-5 13ZM25 37h14l-7-18Z" fill={K} />,
  layers: (
    <>
      <path d="M32 0 63 15 32 30 1 15Z" fill={K} />
      <path d="M1 26 32 42l9-5v6l-9 5L1 32ZM1 41l31 16 9-4v5l-9 4L1 47Z" fill={K} />
      <path d="M46 32h18v4H46Z" fill={K} />
      <path d="M46 36h18v21H46ZM50 40v4h10v-4ZM50 48v4h10v-4Z" fill={B} fillRule="evenodd" />
    </>
  ),
  insert: (
    <>
      <path d="M29 15h21l13 15v33H29Z" fill={B} />
      <path d="M50 15l13 15H50Z" fill="#6c7a90" />
      <path d="M17 3h30v29H17Z" stroke={K} strokeWidth="2.4" fill="none" />
      <circle cx="17" cy="32" r="16" stroke={K} strokeWidth="2.4" fill="none" />
      <path d="M44 1h5v5h-5Z" fill="#fff" stroke={K} strokeWidth="2" />
    </>
  ),
  qr: (
    <>
      <path d="M5 5h20v20H5ZM41 5h18v20H41ZM5 40h20v20H5Z" stroke={K} strokeWidth="5" fill="none" />
      <path d="M11 11h8v8h-8ZM46 11h8v8h-8ZM11 46h8v8h-8ZM31 2h5v14h-5ZM31 20h5v6h-5ZM2 31h18v4H2ZM23 31h22v5H31v8h-4v-8h-4ZM48 31h13v5H48ZM31 47h5v15h-5ZM40 38h6v6h-6ZM50 40h6v12h-6ZM40 48h6v14h-6ZM58 44h4v18h-4ZM50 56h6v6h-6Z" fill={K} />
    </>
  ),
  brush: (
    <>
      <path d="M3 24 24 20 40 43 31 60Z" fill={B} />
      <path d="M25 17q7-11 13-8l16 18q0 9-10 15Z" fill={O} />
      <path d="M42 12l11-9q7 2 9 6l-6 14Z" fill={O} />
      <path d="M39 10l17 17" stroke="#d3dff0" strokeWidth="1.5" />
    </>
  ),
  group: (
    <>
      <path d="M6 9h40v14H18v20H6ZM17 22h38v36H17Z" fill={K} stroke="#d3e0f2" strokeWidth="1.5" />
      <path d="M4 5h6v6H4ZM54 5h6v6h-6ZM4 54h6v6H4ZM54 54h6v6h-6Z" fill="#e6eefa" stroke="#4a6fe8" strokeWidth="2.4" />
    </>
  ),
  measure: (
    <>
      <path d="M2 14h9v10H2ZM53 14h9v10h-9Z" fill={K} />
      <path d="M5 17h3v3H5ZM56 17h3v3h-3Z" fill="#e6eefa" />
      <path d="M14 19h38" stroke={K} strokeWidth="2" strokeDasharray="2 4" />
      <path d="M3 54V36h58v18M15 36v12M28 36v12M38 36v12M49 36v12" stroke={K} strokeWidth="2.6" fill="none" />
    </>
  ),
  paste: (
    <>
      <path d="M1 9h5v5h28V9h4v48H1Z" fill={K} />
      <path d="M9 6h4V1h14v5h4v5H9Z" fill={K} />
      <path d="M33 19h21l10 13v31H33Z" fill={B} />
      <path d="M54 19l10 13H54Z" fill="#6c7a90" />
    </>
  ),
};

function Tri({ className = 'h-[10px] w-[18px] text-[#5580bb]' }: { className?: string }) {
  return (
    <svg viewBox="0 0 18 10" className={`shrink-0 ${className}`} aria-hidden="true" preserveAspectRatio="none">
      <path d="M0 0h18L9 10Z" fill="currentColor" />
    </svg>
  );
}

function Chevron({ className = '', thick }: { className?: string; thick?: boolean }) {
  return (
    <svg viewBox="0 0 16 16" className={`h-4 w-4 ${className}`} aria-hidden="true">
      <path d={thick ? 'M2 5l6 6 6-6' : 'M1 5l7 7 7-7'} stroke="currentColor" strokeWidth={thick ? 2.6 : 1.6} fill="none" />
    </svg>
  );
}

function Cross({ className = '' }: { className?: string }) {
  return (
    <svg viewBox="0 0 20 20" className={`h-5 w-5 ${className}`} aria-hidden="true">
      <path d="M0 0l20 20M20 0 0 20" stroke="currentColor" strokeWidth="1.8" />
    </svg>
  );
}

function Panel({ title, arrow = true, className, launcher, children }: { title: string; arrow?: boolean; className: string; launcher?: boolean; children: ReactNode }) {
  return (
    <section className={`flex shrink-0 flex-col overflow-hidden rounded-sm border border-[#a3bfe0] bg-linear-to-b from-[#c8d6ec] to-[#d9e9f7] ${className}`}>
      <div className="flex h-[140px] shrink-0 border-t border-[#edf4fb] bg-linear-to-b from-white/50 from-0% via-white/20 via-10% to-transparent to-11%">{children}</div>
      <div className={`relative flex flex-1 items-center justify-center gap-[6px] bg-[#c0d8f0] text-[#3a66a8] ${arrow ? 'pl-6' : ''}`}>
        <span>{title}</span>
        {arrow && <Tri />}
        {launcher && (
          <button aria-label="特性设置" className="absolute right-2">
            <Icon name="launcher" className="h-4 w-4" />
          </button>
        )}
      </div>
    </section>
  );
}

function Big({ icon, label, label2, arrow, className }: { icon: string; label: string; label2?: string; arrow?: boolean; className: string }) {
  return (
    <button className={`flex shrink-0 flex-col items-center ${className}`}>
      <span className="flex h-[75px] items-start pt-1">
        <svg viewBox="0 0 64 64" className="h-[62px] w-[62px]" aria-hidden="true">{bigIcons[icon]}</svg>
      </span>
      <span className="h-8 leading-8 whitespace-nowrap">{label}</span>
      {label2 && <span className="h-7 leading-7">{label2}</span>}
      {arrow && <Tri className="mt-[10px] h-[10px] w-[18px] text-[#5580bb]" />}
    </button>
  );
}

type Tool = { icon: string; label?: string; arrow?: boolean };

function ToolCol({ tools, className = '', arrowClass = 'w-6' }: { tools: Tool[]; className?: string; arrowClass?: string }) {
  return (
    <div className={`flex shrink-0 flex-col ${className}`}>
      {tools.map((t) => (
        <button key={t.icon} aria-label={t.label ?? t.icon} className="flex h-[38px] items-center">
          <Icon name={t.icon} className="h-[30px] w-8" />
          {t.label && <span className="ml-[3px] whitespace-nowrap">{t.label}</span>}
          {t.arrow && (
            <span className={`flex justify-center ${arrowClass}`}>
              <Tri />
            </span>
          )}
        </button>
      ))}
    </div>
  );
}

const menus = [
  ['文件', 'F'], ['编辑', 'E'], ['视图', 'V'], ['插入', 'I'], ['格式', 'O'], ['工具', 'T'], ['绘图', 'D'], ['文字', 'X'],
  ['标注', 'N'], ['修改', 'M'], ['窗口', 'W'], ['应用软件', 'A'], ['帮助', 'H'], ['扩展工具', 'S'], ['项目', 'P'], ['云批注', 'C'],
];

const tabs = ['常用', '插入', '注释', '三维', '曲面', '网格', '布局', '视图', '管理', '输出', 'BIM', '应用软件', '帮助', '扩展工具', '项目', '云批注'];

const layerTools = [
  ['lyBulb', 'lySun', 'lyUnlock', 'lyNext', 'lyBlue', 'lyList', 'lyGear'],
  ['lyBulbB', 'lyFreeze', 'lyLock', 'lyPrev', 'lyCheck', 'lyMove', 'lyWalk'],
];

const sideGroups = [
  [['trSet', '桥架设置']],
  [['trDraw', '绘制桥架'], ['trVert', '竖直桥架'], ['trEdit', '桥架编辑'], ['trTwo', '两层连接'], ['trLift', '局部升降'], ['trBreak', '桥架打断'], ['trMerge', '桥架合并']],
  [['trBend', '绘制弯通'], ['trTee', '绘制三通'], ['trCross', '绘制四通'], ['trTaper', '绘制变径'], ['trZ', '乙型连接'], ['trPartEdit', '构件编辑'], ['trConvert', '构件转换'], ['trJoin', '桥架搭接'], ['trRestore', '构件恢复']],
  [['trHanger', '绘支吊架'], ['trHangerEdit', '改支吊架']],
  [['trPlate', '设置隔板'], ['trFill', '桥架填充'], ['trLabel', '桥架标注']],
];

const categories = [
  ['catPlan', '平面设计'], ['catSystem', '系统设计'], ['catCalc', '计算'], ['catHouse', '建筑设计'],
  ['catManage', '工程管理'], ['catTools', '通用工具'], ['catLib', '图库'], ['catHelp', '设置帮助'],
];

const statusTools = [
  ['stSnap', 0], ['stGrid', 0], ['stInput', 1], ['stOrtho', 1], ['stPolar', 0], ['stOsnap', 1], ['stTrack', 1], ['stDyn', 0],
  ['stTrans', 1], ['stCycle', 1], ['stWeight', 0], ['stPick', 0], ['stLayer', 0], ['stFront', 1], ['stAnno', 0],
] as const;

const history = ['请选择一段桥架<退出>:*取消*', '命令:*取消*', '命令:IElecAdjustClBd', '请选择一段桥架<退出>:指定对角点:'];

function StatusButton({ name, on }: { name: string; on?: boolean }) {
  return (
    <button
      aria-label={name}
      className={`mx-px flex h-[42px] w-9 shrink-0 items-center justify-center rounded-sm ${on ? 'border border-[#d6c48c] bg-linear-to-b from-[#fef9de] from-0% via-[#fdeeb0] via-48% to-[#fdf0b4] shadow-[inset_0_-14px_12px_-6px_#fcd75f]' : ''}`}
    >
      <Icon name={name} className="h-[30px] w-[30px]" />
    </button>
  );
}

function TitleBar() {
  return (
    <header className="relative flex h-[67px] shrink-0 items-start bg-white">
      <button aria-label="GstarCAD" className="absolute top-0 left-2 z-10 h-[74px] w-[76px]">
        <svg viewBox="0 0 76 74" className="h-full w-full" aria-hidden="true">
          <defs>
            <radialGradient id="orb" cx=".5" cy=".3" r=".8">
              <stop offset="0" stopColor="#fff" />
              <stop offset=".5" stopColor="#e3e8f2" />
              <stop offset="1" stopColor="#a9b4ca" />
            </radialGradient>
            <linearGradient id="gee" x1="1" y1="0" x2="0" y2="1">
              <stop offset="0" stopColor="#12d0ff" />
              <stop offset=".5" stopColor="#1a74f8" />
              <stop offset="1" stopColor="#0b57e8" />
            </linearGradient>
          </defs>
          <circle cx="38" cy="36" r="36" fill="#8d96a6" opacity=".5" />
          <circle cx="37" cy="34" r="35" fill="url(#orb)" stroke="#9aa3b5" strokeWidth="2" />
          <path d="M55 20H36C22 21 16 34 19 44q3 10 13 9c12-1 19-7 22-20H39l-3 7h8q-3 5-8 5c-7 0-7-8-3-13q3-4 9-4h10Z" fill="url(#gee)" />
        </svg>
      </button>
      <div className="ml-[87px] flex h-[65px] w-[634px] items-center rounded-br-xl border-r-2 border-b border-l border-[#b3b8be] bg-[#e9edf2]">
        <div className="flex h-full w-[389px] items-center pb-2 pl-[9px]">
          <Icon name="newFile" className="mr-[5px] h-[30px] w-8" />
          <Icon name="open" className="mr-[6px] h-[30px] w-8" />
          <Icon name="save" className="mr-[6px] h-[30px] w-8" />
          <Icon name="saveAs" className="mr-[6px] h-[34px] w-8" />
          <Icon name="print" className="mr-[5px] h-[30px] w-8" />
          <Icon name="undo" className="mr-[6px] h-7 w-8" />
          <Tri className="mr-[9px] h-[6px] w-[10px] text-[#5580bb]" />
          <Icon name="redo" className="mr-[8px] h-7 w-8" />
          <Tri className="mr-[10px] h-[6px] w-[10px] text-[#83868a]" />
          <Icon name="pages" className="mr-[6px] h-8 w-8" />
          <Icon name="chat" className="h-[30px] w-[30px]" />
        </div>
        <div className="relative h-full flex-1 border-l border-[#a9c1e4] bg-[#e9f0fb]">
          <select aria-label="工作空间" className="h-[60px] w-full appearance-none bg-transparent pl-px text-black outline-none">
            <option>二维草图</option>
          </select>
          <Tri className="pointer-events-none absolute top-[26px] right-2 h-[7px] w-[11px] text-[#5580bb]" />
        </div>
      </div>
      <button aria-label="自定义" className="mt-[22px] ml-6 flex w-[10px] flex-col gap-1">
        <span className="h-[3px] w-full bg-[#2d5899]" />
        <Tri className="h-[8px] w-[10px] text-[#2d5899]" />
      </button>
      <h1 className="ml-[472px] h-[62px] font-['Noto_Sans','Noto_Sans_CJK_SC',sans-serif] leading-[62px] whitespace-nowrap text-black">浩辰CAD电力2024 - [第8课 三维桥架：桥架.dwg]</h1>
      <div className="ml-auto flex">
        <button aria-label="账户" className="mr-[247px] h-[62px] w-[64px]">
          <svg viewBox="0 0 64 62" className="h-full w-full" aria-hidden="true">
            <circle cx="32" cy="30" r="28.5" stroke={K} strokeWidth="3" fill="none" />
            <circle cx="32" cy="23" r="12" stroke={K} strokeWidth="3" fill="none" />
            <path d="M13 51C15 30 49 30 51 51" stroke={K} strokeWidth="3" fill="none" />
            <circle cx="55" cy="9" r="9" fill="#fff" />
            <circle cx="55" cy="9" r="6" fill="#e03038" />
          </svg>
        </button>
        <button aria-label="最小化" className="flex h-[55px] w-[92px] items-center justify-center bg-[#e3e3e3]">
          <span className="h-[2px] w-5 bg-black" />
        </button>
        <button aria-label="还原" className="flex h-[55px] w-[92px] items-center justify-center text-[#999]">
          <svg viewBox="0 0 20 20" className="h-5 w-5" aria-hidden="true">
            <path d="M1 5h14v14H1ZM5 5V1h14v14h-4" stroke="currentColor" strokeWidth="1.6" fill="none" />
          </svg>
        </button>
        <button aria-label="关闭" className="flex h-[55px] w-[95px] items-center justify-center text-[#999]">
          <Cross />
        </button>
      </div>
    </header>
  );
}

function Combo({ label, value, decor, pad }: { label: string; value: string; decor: ReactNode; pad: string }) {
  return (
    <div className="relative h-[38px] w-[343px] border border-[#b3c3dc] bg-[#eee]">
      <div className="pointer-events-none absolute inset-y-0 left-1 flex items-center">{decor}</div>
      <select aria-label={label} className={`h-full w-full appearance-none bg-transparent text-black outline-none ${pad}`}>
        <option>{value}</option>
      </select>
      <Tri className="pointer-events-none absolute top-[14px] right-[6px] h-[7px] w-[11px] text-[#8a8a8a]" />
    </div>
  );
}

function Ribbon() {
  return (
    <div className="mx-[2px] flex h-[181px] shrink-0 gap-1 rounded-sm border border-b-2 border-[#8db2e3] border-b-[#7fb0d8] bg-linear-to-b from-[#dbe6f4] from-0% via-[#c8d6ec] via-25% to-[#e2f5ff] px-px pt-px pb-[2px] text-[#17428a]">
      <Panel title="绘图" className="w-[375px]">
        <Big icon="line" label="直线" className="ml-[3px] w-[72px]" />
        <Big icon="pline" label="多段线" arrow className="w-[82px]" />
        <Big icon="circle" label="圆" arrow className="w-[75px]" />
        <Big icon="arc" label="圆弧" arrow className="w-[76px]" />
        <ToolCol className="ml-1" tools={[{ icon: 'points', arrow: true }, { icon: 'ellipse', arrow: true }, { icon: 'hatch', arrow: true }]} arrowClass="w-8" />
      </Panel>
      <Panel title="修改" className="w-[405px]">
        <ToolCol className="mr-[9px] ml-[6px]" tools={[{ icon: 'erase', label: '删除' }, { icon: 'offset', label: '偏移' }, { icon: 'move', label: '移动' }]} />
        <ToolCol className="mr-2" tools={[{ icon: 'explode', label: '分解' }, { icon: 'stretch', label: '拉伸' }, { icon: 'rotate', label: '旋转' }]} />
        <ToolCol className="mr-[10px]" tools={[{ icon: 'boolean', label: '布尔' }, { icon: 'mirror', label: '镜像' }, { icon: 'copy', label: '复制' }]} />
        <ToolCol tools={[{ icon: 'array', arrow: true }, { icon: 'fillet', arrow: true }, { icon: 'trim', arrow: true }]} arrowClass="w-[30px]" />
        <ToolCol tools={[{ icon: 'align', arrow: true }, { icon: 'breakAt', arrow: true }, { icon: 'scale', arrow: true }]} arrowClass="w-7" />
      </Panel>
      <Panel title="注释" className="w-[192px]">
        <Big icon="text" label="文字" arrow className="ml-[2px] w-[76px]" />
        <ToolCol className="ml-1" tools={[{ icon: 'table', label: '表格' }, { icon: 'leader', label: '引线', arrow: true }, { icon: 'linear', label: '线性', arrow: true }]} arrowClass="w-[26px]" />
      </Panel>
      <Panel title="图层" className="w-[523px]">
        <Big icon="layers" label="图层" label2="特性" className="w-[79px]" />
        <div className="flex flex-col">
          {layerTools.map((row) => (
            <div key={row[0]} className="flex h-[38px]">
              {row.map((n) => (
                <button key={n} aria-label={n} className="flex w-10 items-center justify-center">
                  <Icon name={n} className="h-[31px] w-8" />
                </button>
              ))}
            </div>
          ))}
          <div className="relative h-[38px] w-[440px] border border-[#b3c3dc] bg-[#eee]">
            <div className="pointer-events-none absolute inset-y-0 left-1 flex items-center gap-1">
              <Icon name="bulb" className="h-7 w-6" />
              <Icon name="sun" className="h-7 w-7" />
              <Icon name="unlock" className="h-7 w-7" />
              <span className="h-7 w-[27px] border border-black bg-white" />
            </div>
            <select aria-label="图层" className="h-full w-full appearance-none bg-transparent pl-[130px] text-black outline-none">
              <option>0</option>
            </select>
            <Tri className="pointer-events-none absolute top-[14px] right-[6px] h-[7px] w-[11px] text-[#8a8a8a]" />
          </div>
        </div>
      </Panel>
      <Panel title="块" className="w-[200px]">
        <Big icon="insert" label="插入" className="w-[81px]" />
        <ToolCol tools={[{ icon: 'attr' }, { icon: 'block' }, { icon: 'blockEdit' }]} className="ml-[2px]" />
        <Big icon="qr" label="二维码" arrow className="ml-[3px] w-[80px]" />
      </Panel>
      <Panel title="特性" className="w-[463px]" launcher>
        <Big icon="brush" label="特性" label2="匹配" className="w-[79px]" />
        <ToolCol tools={[{ icon: 'weights' }, { icon: 'types' }, { icon: 'colors' }]} className="mr-1" />
        <div className="flex flex-col">
          <Combo label="线宽" value="ByLayer" pad="pl-[174px]" decor={<span className="h-[2px] w-40 bg-black" />} />
          <Combo label="线型" value="BYLAYER" pad="pl-[174px]" decor={<span className="ml-2 h-[2px] w-36 bg-black" />} />
          <Combo label="颜色" value="ByLayer" pad="pl-[35px]" decor={<span className="h-[26px] w-[26px] border border-black bg-white" />} />
        </div>
      </Panel>
      <Panel title="组" className="w-[122px]">
        <Big icon="group" label="组" className="w-[80px]" />
        <ToolCol tools={[{ icon: 'groupNew' }, { icon: 'groupEdit' }, { icon: 'groupPick' }]} className="ml-px" />
      </Panel>
      <Panel title="实用工具" className="w-[182px]" arrow={false}>
        <Big icon="measure" label="查询" arrow className="w-[79px]" />
        <ToolCol tools={[{ icon: 'axis' }, { icon: 'calc' }, { icon: 'corner' }]} className="ml-1" />
        <ToolCol tools={[{ icon: 'sheets', arrow: true }, { icon: 'order', arrow: true }, { icon: 'quick', arrow: true }]} className="ml-[6px]" arrowClass="w-7" />
      </Panel>
      <Panel title="剪贴板" className="w-[122px]" arrow={false}>
        <Big icon="paste" label="粘贴" arrow className="w-[80px]" />
        <ToolCol tools={[{ icon: 'pasteTo' }, { icon: 'cut' }, { icon: 'copyClip' }]} className="ml-[2px]" />
      </Panel>
    </div>
  );
}

function Sidebar() {
  return (
    <aside className="-mb-[7px] ml-2 flex w-[229px] shrink-0 flex-col bg-white font-light text-black">
      <h2 className="flex h-[45px] shrink-0 items-center gap-[5px] bg-[#b8cfe9] pl-2 text-[#1b4e9e]">
        <span className="mt-2 h-6 w-[3px] border-x border-dotted border-[#4a5a78]" />
        浩辰电力
      </h2>
      <div className="h-[5px] shrink-0 bg-[#d5e3f2]" />
      <nav className="px-[3px]">
        {sideGroups.map((group, i) => (
          <div key={i} className={i > 0 ? 'border-t border-[#55b8f5] pt-[2px]' : '-mt-1'}>
            {group.map(([icon, label]) => (
              <button key={label} className={`flex h-10 w-full items-center gap-[5px] pl-1 ${i === 0 ? 'font-medium' : ''}`}>
                <Icon name={icon} />
                {label}
              </button>
            ))}
          </div>
        ))}
      </nav>
      <div className="mx-[3px] -mt-[2px] border-x border-b border-[#b9bcc2]">
        {categories.map(([icon, label], i) => (
          <button
            key={label}
            className={`flex h-[51px] w-full items-center border-t border-[#b9bcc2] pl-[9px] ${i === 0 ? 'bg-linear-to-b from-[#ffd3a0] from-0% via-[#ffa53c] via-45% to-[#ffdd76]' : 'bg-linear-to-b from-[#dfebff] from-0% via-[#abcdff] via-50% to-[#c0dbff]'}`}
          >
            {icon === 'catCalc' ? (
              <svg viewBox="0 0 44 40" className="h-10 w-11" aria-hidden="true">
                <path d="M2 3h12M2 37h12M8 3v34" stroke="#42536f" strokeWidth="4" />
                <text x="24" y="18" fontSize="20" fill="#42536f" fontFamily="Liberation Sans">H</text>
                <text x="15" y="37" fontSize="20" fill="#7c8696" fontFamily="Liberation Sans">CH</text>
              </svg>
            ) : (
              <Icon name={icon} className="h-10 w-11" />
            )}
            <span className={`ml-[11px] flex w-24 ${label.length === 2 ? 'justify-between' : ''}`}>
              {label.length === 2 ? label.split('').map((c) => <span key={c}>{c}</span>) : label}
            </span>
          </button>
        ))}
      </div>
    </aside>
  );
}

function Drawing() {
  return (
    <svg viewBox="247 357 2631 1079" className="absolute top-0 left-0 h-[1079px] w-[2631px]" aria-hidden="true">
      <g stroke="#17c6cc" strokeWidth="1.6" fill="none">
        <path d="M1562 901V950H2129A90 90 0 0 0 2219 860V719A22 22 0 0 1 2241 697H2810V648H2260A91 91 0 0 0 2169 738V879A22 22 0 0 1 2147 901H1562" />
        <path d="M1562 922H2129A64 62 0 0 0 2193 860V738A67 67 0 0 1 2260 671H2810" />
        <path d="M2129 901v49M2169 860h50M2169 738h50M2260 648v49" />
      </g>
      <text x="1790" y="954" fontSize="10" fill="#20d050" fontFamily="Liberation Sans">100X0T</text>
      <g stroke="#fff" strokeWidth="1.6" fill="none">
        <path d="M278 1386h20v20h-20ZM288 1286v110h110" />
      </g>
      <g fill="#fff" fontFamily="Lato" fontWeight="300" fontSize="35" textAnchor="middle">
        <text x="299" y="1272">Y</text>
        <text x="425" y="1397">X</text>
      </g>
    </svg>
  );
}

function Compass() {
  return (
    <svg viewBox="120 -30 600 720" className="absolute top-[13px] right-0 h-[240px] w-[200px]" aria-hidden="true">
      <g fill="#6b6b6b">
        <path d="M316 90H510L481 162H343ZM516 94 656 229 588 261 487 165ZM660 240V433L585 406V268ZM654 441 516 578 487 503 582 411ZM510 582H316L343 507H482ZM309 578 171 441 248 410 339 503ZM165 433V240L243 268V406ZM169 229 309 94 339 165 243 261Z" />
      </g>
      <path d="M329 213H497L537 250V420L497 456H329L291 420V250Z" fill="#fff" />
      <path d="M329 213H497V250H537V420H497V456H329V420H291V250H329Z" fill="#c8cac8" />
      <path d="M329 249H495V420H329Z" fill="#a3a5a3" />
      <g fill="#fff" fontFamily="Noto Sans CJK SC" fontWeight="100" fontSize="92" textAnchor="middle">
        <text x="414" y="132">北</text>
        <text x="414" y="614">南</text>
        <text x="172" y="369">西</text>
        <text x="652" y="369">东</text>
        <text x="412" y="378" fontSize="112" fill="#6b6b6b">上</text>
      </g>
    </svg>
  );
}

const dlgBtn = 'h-10 border border-[#adadad] bg-[#e1e1e1]';

function PlateDialog() {
  return (
    <div role="dialog" aria-label="隔板设置对话框" className="absolute top-[87px] left-[42px] w-[468px] bg-[#f0f0f0] font-light text-black shadow-[0_0_0_1px_#4a4e54,0_6px_16px_4px_rgba(0,0,0,0.4)]">
      <div className="flex h-14 items-center justify-between bg-white pr-6 pb-[2px] pl-3 font-normal text-[#999]">
        <span>隔板设置对话框</span>
        <button aria-label="关闭"><Cross /></button>
      </div>
      <div className="flex flex-col px-[9px] pt-[9px] pb-[10px]">
        <label className="flex h-[42px] items-center">
          <span className="w-[75px] pb-2">规格：</span>
          <input readOnly defaultValue="700X100" className="h-full w-[120px] border-t border-r border-b border-l border-t-[#a0a0a0] border-r-white border-b-white border-l-[#a0a0a0] bg-transparent pt-[2px] pl-[2px] font-['Liberation_Serif'] outline-none" />
        </label>
        <hr className="mt-[9px] mr-[2px] mb-[10px] h-[2px] border-t border-b border-t-[#a0a0a0] border-b-white" />
        <div className="flex h-8 items-center">
          <label htmlFor="plate" className="w-[75px]">隔板：</label>
          <div className="relative">
            <select id="plate" className="h-8 w-[120px] appearance-none border border-[#adadad] bg-[#e1e1e1] pl-1 outline-none">
              <option>设置</option>
            </select>
            <Chevron className="pointer-events-none absolute top-2 right-2 text-[#444]" />
          </div>
          <label htmlFor="code" className="ml-3 w-[99px]">通道码：</label>
          <div className="relative">
            <select id="code" className="h-8 w-[144px] appearance-none border border-[#adadad] bg-[#e1e1e1] pl-1 font-['Liberation_Serif'] outline-none">
              <option>300X</option>
            </select>
            <Chevron className="pointer-events-none absolute top-2 right-2 text-[#444]" />
          </div>
        </div>
        <div className="mt-[26px] flex items-center">
          <label className="flex w-[232px] items-center gap-[7px] whitespace-nowrap">
            <span className="relative flex h-[26px] w-[26px] shrink-0">
              <input type="checkbox" defaultChecked className="h-full w-full appearance-none border-2 border-[#333] bg-white" />
              <svg viewBox="0 0 26 26" className="pointer-events-none absolute inset-0" aria-hidden="true">
                <path d="M5 13l6 6L22 7" stroke="#333" strokeWidth="1.8" fill="none" />
              </svg>
            </span>
            修改连接桥架数据
          </label>
          <button className={`${dlgBtn} w-[103px]`}>确定</button>
          <button className={`${dlgBtn} ml-[11px] w-[103px]`}>取消</button>
        </div>
      </div>
    </div>
  );
}

function ChannelDialog() {
  return (
    <div role="dialog" aria-label="通道设置" className="absolute top-[64px] left-[630px] w-[675px] bg-[#f0f0f0] font-light text-black shadow-[0_0_0_1px_#3a3e44,0_8px_24px_8px_rgba(0,0,0,0.5)]">
      <div className="flex h-14 items-center justify-between bg-white pr-[23px] pb-[2px] pl-3 font-normal">
        <span>通道设置</span>
        <button aria-label="关闭"><Cross /></button>
      </div>
      <div className="flex flex-col pt-[18px] pr-[21px] pb-[22px] pl-[21px]">
        <div className="flex gap-[15px]">
          <svg viewBox="0 0 267 297" className="mt-[3px] h-[297px] w-[267px] bg-[#212830]" aria-hidden="true">
            <path d="M189 34H103V263H189M103 132H189" stroke="#00ffff" strokeWidth="1.2" fill="none" />
            <path d="M87 30V266M79 34h16M79 132h16M79 263h16" stroke="#00ff00" strokeWidth="1.2" />
            <path d="M84 31l6 6M84 129l6 6M84 260l6 6" stroke="#00ff00" strokeWidth="4" />
            <g fill="#fff" fontFamily="Liberation Sans" fontSize="13" textAnchor="middle">
              <text transform="translate(84 84) rotate(-90)">300</text>
              <text transform="translate(84 199) rotate(-90)">400</text>
            </g>
          </svg>
          <div className="flex w-[351px] flex-col">
            <div className="flex h-[51px]">
              <button aria-label="插入通道" className="flex w-[54px] items-center justify-center border border-t-white border-r-[#777] border-b-[#777] border-l-white">
                <svg viewBox="0 0 16 20" className="h-5 w-4" aria-hidden="true">
                  <path d="M7 2h7M7 5h7M7 9h7M14 5v4M7 5v5M2 13h6M2 13v4h6v-4" stroke="#000" strokeWidth="1.4" fill="none" />
                  <path d="M4 15h8" stroke="red" strokeWidth="1.4" />
                </svg>
              </button>
              <button aria-label="删除通道" className="flex w-[54px] items-center justify-center border border-t-white border-r-[#555] border-b-[#555] border-l-white p-[2px]">
                <span className="flex h-full w-full items-center justify-center border border-dotted border-[#333]">
                  <svg viewBox="0 0 16 20" className="h-5 w-4" aria-hidden="true">
                    <path d="M7 2h7M7 5h7M7 9h7M14 5v4M7 5v5M5 13h6M5 13v4h6" stroke="#000" strokeWidth="1.4" fill="none" />
                    <path d="M0 15h6" stroke="red" strokeWidth="1.4" />
                  </svg>
                </span>
              </button>
              <label htmlFor="spec" className="mt-2 ml-[13px] flex w-[74px] items-center whitespace-nowrap">规格：</label>
              <div className="relative mt-[9px]">
                <select id="spec" disabled className="h-8 w-[156px] appearance-none border border-[#ccc] bg-linear-to-r from-[#f0f0f0] from-76% to-white to-76% pl-1 font-['Liberation_Serif'] text-[#838383] opacity-100 outline-none">
                  <option>700X100</option>
                </select>
                <Chevron className="pointer-events-none absolute top-2 right-2 text-[#aaa]" />
              </div>
            </div>
            <div className="mt-[3px] h-[213px] bg-white">
              <table className="w-full table-fixed border-collapse text-left">
                <colgroup>
                  <col className="w-7" />
                  <col className="w-[174px]" />
                  <col />
                </colgroup>
                <thead>
                  <tr className="h-8 border-b border-[#666] bg-[#f0f0f0]">
                    <th />
                    <th className="border-r border-[#666] pl-[6px] leading-[30px] font-light">通道宽</th>
                    <th className="pl-[6px] leading-[30px] font-light">通道码</th>
                  </tr>
                </thead>
                <tbody className="font-['Liberation_Serif']">
                  {['300', '400'].map((w) => (
                    <tr key={w}>
                      <td className="bg-[#ffe4d6]" />
                      <td className="border-r border-b border-[#800000] pl-[3px] leading-[27px]">{w}</td>
                      <td className="border-b border-[#800000]" />
                    </tr>
                  ))}
                </tbody>
              </table>
            </div>
            <div className="flex h-8 items-center text-[#555]">
              <Chevron thick className="mx-[9px] rotate-90" />
              <span className="h-full w-[277px] bg-[#cdcdcd]" />
              <Chevron thick className="ml-[15px] -rotate-90" />
            </div>
          </div>
        </div>
        <div className="mt-[18px] h-[5px] border border-[#a0a0a0]" />
        <div className="mt-[11px] flex justify-end gap-[14px]">
          <button className="h-10 w-[148px] border-2 border-[#0078d7] bg-[#e1e1e1]">确定</button>
          <button className={`${dlgBtn} w-[148px]`}>取消</button>
        </div>
      </div>
    </div>
  );
}

function HistoryLine({ text }: { text: string }) {
  // latin runs are half the width of a han character
  return (
    <p className="h-[34px] whitespace-nowrap">
      {text.split(/([\x20-\x7e]+)/).map((part, i) =>
        i % 2 ? <span key={i} className="font-['DejaVu_Sans_Mono'] text-[23px]">{part}</span> : part,
      )}
    </p>
  );
}

function Workspace() {
  return (
    <main className="ml-[9px] flex min-w-0 flex-1 flex-col">
      <div className="flex h-8 shrink-0 items-end bg-[#f0f0f0]">
        <div className="relative flex h-[31px] w-[345px] items-center">
          <svg viewBox="0 0 345 31" className="absolute inset-0" aria-hidden="true">
            <defs>
              <linearGradient id="doc" x1="0" y1="0" x2="0" y2="1">
                <stop offset="0" stopColor="#fff0cf" />
                <stop offset=".45" stopColor="#ffca66" />
                <stop offset=".75" stopColor="#ffe2a4" />
                <stop offset="1" stopColor="#ffd88a" />
              </linearGradient>
            </defs>
            <path d="M1 31 28 4Q31 1 36 1H344V31" fill="url(#doc)" stroke="#8a8a8a" />
          </svg>
          <span className="relative mt-[2px] ml-[47px] font-light whitespace-pre text-black">{'第8课  三维桥架：桥架'}</span>
          <button aria-label="关闭图纸" className="absolute top-3 right-4 text-[#ccc]">
            <svg viewBox="0 0 14 14" className="h-[14px] w-[14px]" aria-hidden="true">
              <path d="M2 2l10 10M12 2 2 12" stroke="currentColor" strokeWidth="4" />
            </svg>
          </button>
        </div>
      </div>
      <div className="relative mr-[2px] min-h-0 flex-1 overflow-hidden border-t border-l border-[#888] bg-[#212830]">
        <Drawing />
        <Compass />
        <PlateDialog />
        <ChannelDialog />
      </div>
      <div className="mt-[2px] flex h-9 shrink-0 items-start border-t border-[#666] bg-[#d3e3f3] pl-[78px] text-black">
        <button className="h-[33px] w-[78px] bg-[#212830] leading-[30px] font-bold text-white [clip-path:polygon(0_0,100%_0,80%_100%,20%_100%)]">模型</button>
        <div className="relative h-[33px] w-28">
          <svg viewBox="0 0 112 33" className="absolute inset-0" aria-hidden="true">
            <path d="M-4 16 3 32H62L78 0M70 16l8 16h11L107 0" stroke="#8a9cc0" fill="none" />
          </svg>
          <button className="absolute top-0 -left-1 leading-[30px] whitespace-nowrap">布局1</button>
          <button aria-label="新建布局" className="absolute top-0 left-[73px] leading-8">+</button>
        </div>
      </div>
      <div className="mt-2 mr-[2px] flex h-[182px] shrink-0">
        <div className="flex w-11 flex-col items-center bg-[#b8cfe9] text-[#6a7078]">
          <span className="mt-1 h-1 w-7 border-y border-dotted border-[#4a5a78]" />
          <svg viewBox="0 0 26 26" className="mt-[5px] h-[26px] w-[26px]" aria-hidden="true">
            <path d="M1 1l24 24M25 1 1 25" stroke="currentColor" strokeWidth="3" />
          </svg>
          <svg viewBox="0 0 26 26" className="mt-3 h-[26px] w-[26px]" aria-hidden="true">
            <path d="M1 24l1-7L16 2l5 5L7 21ZM13 20h12M13 24h12" stroke="currentColor" strokeWidth="2.8" fill="none" />
          </svg>
        </div>
        <div className="flex min-w-0 flex-1 flex-col border-t-2 border-l-2 border-[#6a6a6a] bg-white">
          <div className="flex h-[142px]">
            <div className="flex-1 pt-1 pl-1 font-['Liberation_Mono','Noto_Sans_CJK_SC',monospace] text-[28px] leading-[34px] text-black">
              {history.map((h) => (
                <HistoryLine key={h} text={h} />
              ))}
            </div>
            <div className="flex w-8 flex-col items-center bg-[#f0f0f0] text-[#555]">
              <Chevron thick className="mt-[10px] rotate-180" />
              <span className="mt-[49px] h-[34px] w-full bg-[#cdcdcd]" />
              <Chevron thick className="mt-[9px]" />
            </div>
          </div>
          <div className="flex flex-1 border-t border-[#6a6a6a]">
            <input aria-label="命令行" className="min-w-0 flex-1 px-1 text-[28px] outline-none" />
            <div className="mr-[34px] flex w-40 items-center bg-[#f0f0f0] text-[#555]">
              <Chevron thick className="mr-[9px] ml-[9px] rotate-90" />
              <span className="h-full w-[34px] bg-[#cdcdcd]" />
              <Chevron thick className="mr-[10px] ml-auto -rotate-90" />
            </div>
          </div>
        </div>
      </div>
    </main>
  );
}

function StatusBar() {
  return (
    <footer className="relative mt-2 flex h-[47px] shrink-0 items-center border-t border-[#5b86bf] bg-linear-to-b from-[#dbe8fa] from-0% via-[#aecdf4] via-22% to-[#d4e2f8] text-[#17428a]">
      <div className="flex w-[916px] shrink-0 items-center pl-[3px] whitespace-nowrap">
        <button className="flex items-center gap-[6px]"><span>比例 <span className="text-[22px]">1:100</span></span><Tri className="h-[6px] w-[10px] text-[#6f94cc]" /></button>
        <span className="ml-2">单位<span className="text-[22px]">:mm</span></span>
        <span className="ml-[14px] text-[22px]">-897137.51, -9056.78, 0.00</span>
      </div>
      {statusTools.map(([n, on]) => (
        <StatusButton key={n} name={n} on={on === 1} />
      ))}
      <button className="flex w-[47px] items-center gap-[5px] text-[22px]">1:1<Tri className="h-[6px] w-[10px] text-[#6f94cc]" /></button>
      <StatusButton name="stAnnoBulb" />
      <StatusButton name="stAnnoFlash" />
      <StatusButton name="stTable" />
      <div className="ml-auto flex pr-[15px]">
        <StatusButton name="stCorner" on />
        <StatusButton name="stHatch" on />
        <StatusButton name="stEqual" />
        <StatusButton name="stShapes" on />
      </div>
      <div className="flex h-full items-center border-l border-[#5b86bf] bg-linear-to-b from-[#a9c8f2] from-0% via-[#8db2e8] via-22% to-[#85a6d8] pr-1 pl-[5px]">
        {['gear', 'unlockB', 'bulb', 'chip', 'wave', 'expand'].map((n) => (
          <button key={n} aria-label={n} className="flex w-[38px] justify-center">
            <Icon name={n} className="h-[26px] w-[26px]" />
          </button>
        ))}
        <span className="ml-1 w-[98px] text-[22px]">GstarCAD</span>
      </div>
    </footer>
  );
}

export default function App() {
  return (
    <div className="relative flex h-screen flex-col overflow-hidden bg-[#bfdbff] font-['Noto_Sans_CJK_SC',sans-serif] text-[24px] leading-8">
      <TitleBar />
      <nav className="flex h-[36px] shrink-0 items-center gap-[23px] border-b border-[#b8bfc6] bg-[#dde8ee] pt-[2px] pl-[58px] text-[#17428a]">
        {menus.map(([label, key]) => (
          <button key={label} className="whitespace-nowrap">
            {label}(<u className="decoration-1 underline-offset-2">{key}</u>)
          </button>
        ))}
      </nav>
      <div className="flex h-[39px] shrink-0 items-end pl-[3px] text-[#17428a]">
        {tabs.map((t, i) => (
          <button
            key={t}
            className={`h-[36px] whitespace-nowrap ${i === 0 ? 'w-[75px] rounded-t-md bg-linear-to-b from-white to-[#dce8f6] shadow-[0_0_2px_#7fa5d6]' : 'px-[15px]'}`}
          >
            {t}
          </button>
        ))}
        <div className="ml-auto flex h-full items-center pr-[6px]">
          <button className="flex items-center">外观<Tri className="h-[6px] w-[10px] text-[#5580bb]" /></button>
          <button aria-label="最小化文档" className="ml-4 flex h-5 w-4 flex-col justify-end"><span className="h-1 bg-[#5f6670]" /><span className="h-[3px] bg-white" /></button>
          <button aria-label="还原文档" className="ml-5">
            <svg viewBox="0 0 22 20" className="h-5 w-[22px]" aria-hidden="true">
              <path d="M5 3h15v12M1 7h14v10H1Z" stroke="#7793bd" strokeWidth="2" fill="none" /><path d="M4 0h17v3H4ZM0 5h16v3H0Z" fill="#5f6670" />
            </svg>
          </button>
          <button aria-label="关闭文档" className="ml-4">
            <svg viewBox="0 0 24 22" className="h-[22px] w-6" aria-hidden="true">
              <path d="M4 21 20 3M20 21 4 3" stroke="#fff" strokeWidth="5" /><path d="M4 18 20 1M20 18 4 1" stroke="#6f87ac" strokeWidth="5" />
            </svg>
          </button>
        </div>
      </div>
      <Ribbon />
      <div className="mt-px flex min-h-0 flex-1">
        <Sidebar />
        <Workspace />
      </div>
      <StatusBar />
      {/* callout arrows drawn over the window */}
      <svg viewBox="0 0 2880 1719" className="pointer-events-none absolute top-0 left-0 h-[1719px] w-[2880px]" aria-hidden="true">
        <g fill="#ff2012">
          <path d="M160 1162 354 815 341 806 376 771 374 821 367 819 163 1163Z" />
          <path d="M1582 600 1822 826 1815 837 1857 843 1836 803 1830 810 1585 596Z" />
        </g>
      </svg>
    </div>
  );
}
